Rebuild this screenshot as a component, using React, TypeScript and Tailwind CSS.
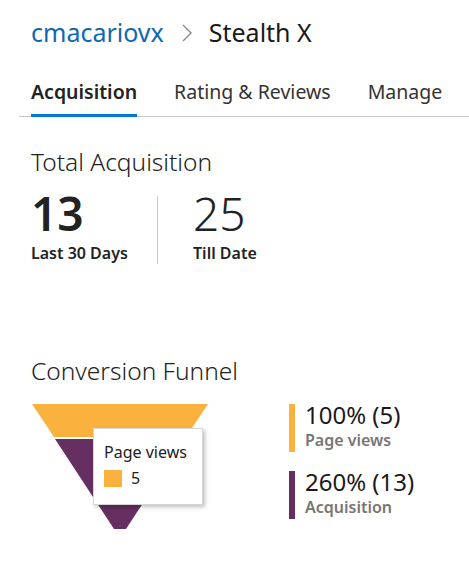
import React from 'react';

const ORANGE = '#fbb13d';
const PURPLE = '#652f62';

function Funnel() {
  return (
    <div className="relative w-[240px] h-[130px]">
      <svg width="240" height="130" viewBox="0 0 240 130" className="absolute left-0 top-0">
        <polygon points="32,0 208,0 186,33 54,33" fill={ORANGE} />
        <polygon points="55,35 185,35 126,125 114,125" fill={PURPLE} />
      </svg>
      {/* tooltip */}
      <div className="absolute left-[93px] top-[24px] w-[110px] h-[77px] bg-white border border-[#d6d6d6] shadow-[2px_2px_4px_rgba(0,0,0,0.25)] px-[10px] pt-[13px]">
        <div className="text-[16px] leading-[20px] text-[#222]">Page views</div>
        <div className="flex items-center gap-[9px] mt-[6px]">
          <span className="w-[18px] h-[17px]" style={{ backgroundColor: ORANGE }} />
          <span className="text-[16px] leading-[20px] text-[#222]">5</span>
        </div>
      </div>
    </div>
  );
}

function LegendItem({ color, value, label }: { color: string; value: string; label: string }) {
  return (
    <div className="flex gap-[10px]">
      <div className="w-[6px] h-[48px]" style={{ backgroundColor: color }} />
      <div className="flex flex-col -mt-[4px]">
        <span className="text-[24px] leading-[30px] text-[#1a1a1a]">{value}</span>
        <span className="text-[16px] leading-[20px] font-semibold text-[#767676]">{label}</span>
      </div>
    </div>
  );
}

export default function App() {
  return (
    <div className="w-[469px] h-[588px] bg-white overflow-hidden font-['Noto_Sans',sans-serif]">
      {/* breadcrumb */}
      <div className="flex items-center pl-[31px] pt-[14px] h-[50px] text-[25px] leading-[36px]">
        <span className="text-[#0f67b1]">cmacariovx</span>
        <svg width="12" height="20" viewBox="0 0 12 20" className="ml-[17px] mr-[16px] mt-[2px]">
          <path d="M2 2 L10 10 L2 18" fill="none" stroke="#8a8a8a" strokeWidth="1.4" />
        </svg>
        <span className="text-[#1a1a1a]">Stealth X</span>
      </div>

      {/* tabs */}
      <div className="ml-[19px] mt-[28px] flex border-b border-[#c8c8c8] text-[19.5px] leading-[28px]">
        <div className="ml-[12px] pb-[8px] -mb-px border-b-[3px] border-[#0078d4] font-semibold text-[#222]">
          Acquisition
        </div>
        <div className="ml-[37px] pb-[8px] text-[#333]">Rating &amp; Reviews</div>
        <div className="ml-[37px] pb-[8px] text-[#333]">Manage</div>
      </div>

      {/* total acquisition */}
      <div className="pl-[31px] pt-[30px]">
        <div className="text-[24.5px] leading-[30px] font-light text-[#222]">Total Acquisition</div>
        <div className="flex mt-[13px] h-[80px]">
          <div className="flex flex-col w-[126px]">
            <span className="text-[46px] leading-[46px] font-semibold text-[#222]">13</span>
            <span className="text-[16px] leading-[24px] font-semibold text-[#222] mt-[5px]">Last 30 Days</span>
          </div>
          <div className="w-px h-[68px] mt-[6px] bg-[#c8c8c8]" />
          <div className="flex flex-col pl-[35px]">
            <span className="text-[46px] leading-[46px] font-light text-[#222]">25</span>
            <span className="text-[16px] leading-[24px] font-semibold text-[#222] mt-[5px]">Till Date</span>
          </div>
        </div>
      </div>

      {/* conversion funnel */}
      <div className="pt-[86px]">
        <div className="pl-[31px] text-[24.5px] leading-[30px] font-light text-[#222]">Conversion Funnel</div>
        <div className="flex mt-[18px]">
          <Funnel />
          <div className="flex flex-col gap-[19px] ml-[49px]">
            <LegendItem color={ORANGE} value="100% (5)" label="Page views" />
            <LegendItem color={PURPLE} value="260% (13)" label="Acquisition" />
          </div>
        </div>
      </div>
    </div>
  );
}
